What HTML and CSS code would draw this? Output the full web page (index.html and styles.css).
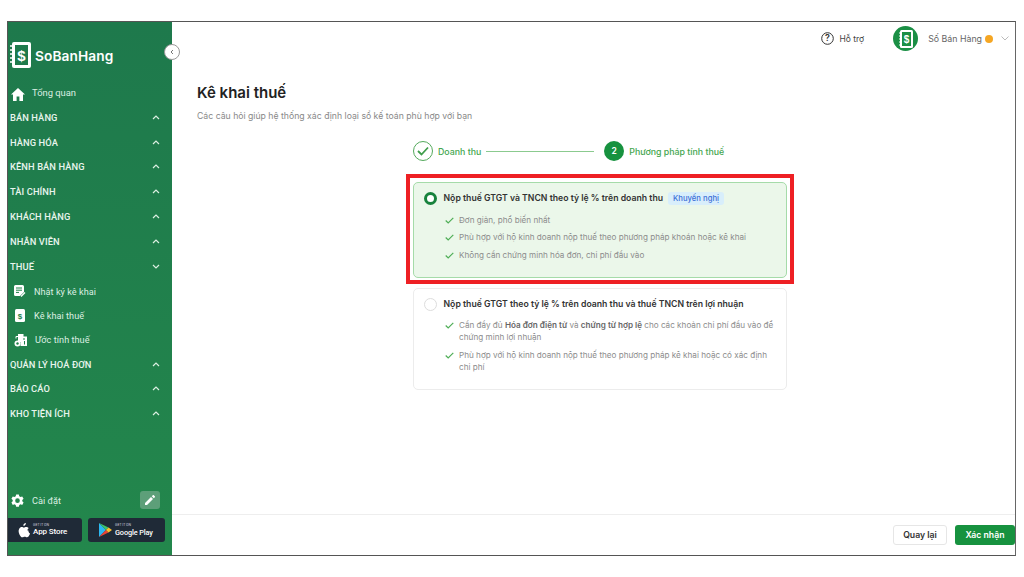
FILE: index.html
```html
<!DOCTYPE html>
<html lang="vi">
<head>
<meta charset="utf-8">
<title>Kê khai thuế</title>
<link rel="stylesheet" href="styles.css">
</head>
<body>
<div class="app">
  <aside class="sidebar">
    <div class="logo">
      <svg class="logo-mark" width="21" height="26" viewBox="0 0 21 26"><rect x="2" y="0" width="19" height="26" rx="2" fill="#fff"/><path d="M0 4h4M0 8h4M0 12h4M0 16h4M0 20h4" stroke="#fff" stroke-width="1.4"/><rect x="5" y="3" width="13" height="20" fill="#1e7a4c"/><text x="11.5" y="19" text-anchor="middle" class="logo-dollar">$</text></svg>
      <span class="logo-text">SoBanHang</span>
    </div>
    <button class="collapse"><svg width="6" height="6" viewBox="0 0 6 6"><path d="M4 1 2 3l2 2" fill="none" stroke="#777" stroke-width="1"/></svg></button>
    <nav class="nav">
      <a class="overview"><svg width="14" height="13" viewBox="0 0 14 13"><path d="M7 0 0 6.5h2V13h3.6V8.6h2.8V13H12V6.5h2z" fill="#fff"/></svg><span>Tổng quan</span></a>
      <a class="group">BÁN HÀNG<svg class="chev" viewBox="0 0 8 5"><path d="M1 4l3-3 3 3"/></svg></a>
      <a class="group">HÀNG HÓA<svg class="chev" viewBox="0 0 8 5"><path d="M1 4l3-3 3 3"/></svg></a>
      <a class="group">KÊNH BÁN HÀNG<svg class="chev" viewBox="0 0 8 5"><path d="M1 4l3-3 3 3"/></svg></a>
      <a class="group">TÀI CHÍNH<svg class="chev" viewBox="0 0 8 5"><path d="M1 4l3-3 3 3"/></svg></a>
      <a class="group">KHÁCH HÀNG<svg class="chev" viewBox="0 0 8 5"><path d="M1 4l3-3 3 3"/></svg></a>
      <a class="group">NHÂN VIÊN<svg class="chev" viewBox="0 0 8 5"><path d="M1 4l3-3 3 3"/></svg></a>
      <a class="group group-open">THUẾ<svg class="chev" viewBox="0 0 8 5"><path d="M1 1l3 3 3-3"/></svg></a>
      <a class="sub"><svg width="12" height="13" viewBox="0 0 12 13"><path d="M0 1.5A1.5 1.5 0 0 1 1.500 0h7A1.500 1.500 0 0 1 10 1.500V7L6 11H1.500A1.500 1.500 0 0 1 0 9.500z" fill="#fff"/><path d="M2 3h6M2 5.200h6M2 7.400h3" stroke="#1f8049" stroke-width="1"/><path d="M7 11.500 11 7.500" stroke="#fff" stroke-width="1.300"/></svg><span>Nhật ký kê khai</span></a>
      <a class="sub"><svg width="12" height="13" viewBox="0 0 12 13"><rect x="1" y="0" width="10" height="13" rx="1.500" fill="#fff"/><text x="6" y="9.500" text-anchor="middle" class="sub-dollar">$</text></svg><span>Kê khai thuế</span></a>
      <a class="sub sub-wide"><svg width="13" height="14" viewBox="0 0 13 14"><path d="M4 1h5.500v2.500H13V13H6.500V9H4z" fill="#fff"/><path d="M9 6h2M10.500 8v3.500" stroke="#1f8049" stroke-width="1"/><path d="M6 3.500H2v2" fill="none" stroke="#fff"/><circle cx="3.500" cy="10.500" r="3" fill="#fff"/><circle cx="3.500" cy="10.500" r="1.200" fill="#1f8049"/></svg><span>Ước tính thuế</span></a>
      <a class="group">QUẢN LÝ HOÁ ĐƠN<svg class="chev" viewBox="0 0 8 5"><path d="M1 4l3-3 3 3"/></svg></a>
      <a class="group">BÁO CÁO<svg class="chev" viewBox="0 0 8 5"><path d="M1 4l3-3 3 3"/></svg></a>
      <a class="group">KHO TIỆN ÍCH<svg class="chev" viewBox="0 0 8 5"><path d="M1 4l3-3 3 3"/></svg></a>
    </nav>
    <div class="settings">
      <svg width="13" height="13" viewBox="0 0 24 24"><path fill="#fff" fill-rule="evenodd" d="M9.500 1h5l.8 3.200 2.300 1.300 3.100-1 2.500 4.300-2.400 2.200v2.600l2.400 2.200-2.500 4.300-3.100-1-2.300 1.300-.8 3.200h-5l-.8-3.200-2.300-1.300-3.100 1L.8 15.800l2.400-2.200V11L.8 8.800l2.500-4.300 3.100 1 2.300-1.300zM12 8a4.300 4.300 0 1 0 0 8.600A4.300 4.300 0 0 0 12 8z"/></svg>
      <span>Cài đặt</span>
      <button class="edit"><svg width="10" height="10" viewBox="0 0 10 10"><path d="M0 10V8l6-6 2 2-6 6zM6.800 1.200 7.800.2a.7.7 0 0 1 1 0l1 1a.7.7 0 0 1 0 1l-1 1z" fill="#fff"/></svg></button>
    </div>
    <div class="stores">
      <a class="store store-apple">
        <svg width="12" height="15" viewBox="0 0 12 15"><path fill="#fff" d="M8.300 0c.1 1.500-1.200 3-2.700 2.900C5.400 1.500 6.900.100 8.300 0zM9.900 7.900c0-1.500 1.200-2.200 1.300-2.300C10.500 4.500 9.300 4.300 8.800 4.300c-1-.1-2 .6-2.600.6-.5 0-1.300-.6-2.200-.6C2.900 4.300 1.900 5 1.300 6-.1 8.300 1 11.700 2.300 13.500c.6.900 1.400 1.900 2.400 1.500.9 0 1.300-.6 2.400-.6s1.400.6 2.400.6 1.600-.9 2.200-1.800c.7-1 1-2 1-2-.1 0-1.800-.8-1.800-3.300z" transform="scale(.95)"/></svg>
        <span class="store-text"><small>GET IT ON</small><b>App Store</b></span>
      </a>
      <a class="store">
        <svg width="13" height="14" viewBox="0 0 13 14"><path d="M0 0v14l7-7z" fill="#2bb8f2"/><path d="M0 0l7 7 2.500-2.500z" fill="#3cc46a"/><path d="M0 14l7-7 2.500 2.500z" fill="#ea4335"/><path d="M9.500 4.500 7 7l2.500 2.500L13 7z" fill="#fbc02d"/></svg>
        <span class="store-text"><small>GET IT ON</small><b class="play">Google Play</b></span>
      </a>
    </div>
  </aside>
  <main class="main">
    <header class="topbar">
      <span class="help"><svg width="13" height="13" viewBox="0 0 13 13"><circle cx="6.500" cy="6.500" r="5.800" fill="none" stroke="#333" stroke-width="1"/><text x="6.500" y="9.300" text-anchor="middle" class="help-q">?</text></svg>Hỗ trợ</span>
      <span class="avatar"><svg width="14" height="18" viewBox="0 0 14 18"><rect x="1" y="0" width="13" height="18" rx="1.500" fill="#fff"/><path d="M0 3h2M0 6h2M0 9h2M0 12h2M0 15h2" stroke="#fff"/><rect x="3" y="2" width="9" height="14" fill="#1b8f45"/><text x="7.500" y="13" text-anchor="middle" class="avatar-dollar">$</text></svg></span>
      <span class="user">Số Bán Hàng</span>
      <span class="dot"></span>
      <svg class="caret" width="8" height="5" viewBox="0 0 8 5"><path d="M.5.500 4 4 7.500.500" fill="none" stroke="#aaa" stroke-width=".8"/></svg>
    </header>
    <section class="content">
      <h1>Kê khai thuế</h1>
      <p class="lead">Các câu hỏi giúp hệ thống xác định loại sổ kế toán phù hợp với bạn</p>
      <div class="steps">
        <span class="step-check"><svg width="12" height="10" viewBox="0 0 12 10"><path d="M1 5l3.500 3.500L11 1.500" fill="none" stroke="#3f9d4b" stroke-width="1.800"/></svg></span>
        <span class="step-label">Doanh thu</span>
        <span class="step-line"></span>
        <span class="step-num">2</span>
        <span class="step-label">Phương pháp tính thuế</span>
      </div>
      <div class="options">
        <article class="option option-on">
          <div class="option-head">
            <span class="radio radio-on"></span>
            <strong>Nộp thuế GTGT và TNCN theo tỷ lệ % trên doanh thu</strong>
            <span class="tag">Khuyến nghị</span>
          </div>
          <ul>
            <li><svg class="tick" viewBox="0 0 9 7"><path d="M.7 3.500 3.200 6 8.300.800"/></svg><span>Đơn giản, phổ biến nhất</span></li>
            <li><svg class="tick" viewBox="0 0 9 7"><path d="M.7 3.500 3.200 6 8.300.800"/></svg><span>Phù hợp với hộ kinh doanh nộp thuế theo phương pháp khoán hoặc kê khai</span></li>
            <li><svg class="tick" viewBox="0 0 9 7"><path d="M.7 3.500 3.200 6 8.300.800"/></svg><span>Không cần chứng minh hóa đơn, chi phí đầu vào</span></li>
          </ul>
        </article>
        <article class="option">
          <div class="option-head">
            <span class="radio"></span>
            <strong>Nộp thuế GTGT theo tỷ lệ % trên doanh thu và thuế TNCN trên lợi nhuận</strong>
          </div>
          <ul>
            <li><svg class="tick" viewBox="0 0 9 7"><path d="M.7 3.500 3.200 6 8.300.800"/></svg><span>Cần đầy đủ <b>Hóa đơn điện tử</b> và <b>chứng từ hợp lệ</b> cho các khoản chi phí đầu vào để chứng minh lợi nhuận</span></li>
            <li><svg class="tick" viewBox="0 0 9 7"><path d="M.7 3.500 3.200 6 8.300.800"/></svg><span>Phù hợp với hộ kinh doanh nộp thuế theo phương pháp kê khai hoặc có xác định chi&nbsp;phí</span></li>
          </ul>
        </article>
      </div>
    </section>
    <footer class="footer">
      <button class="btn">Quay lại</button>
      <button class="btn btn-primary">Xác nhận</button>
    </footer>
  </main>
</div>
</body>
</html>
```
FILE: styles.css
```css
* { box-sizing: border-box; }
html, body { margin: 0; height: 100%; background: #fff; }
body { padding: 21px 8px 21px 7px; font-family: Inter, "Noto Sans", sans-serif; color: #333; overflow: hidden; }
button { font-family: inherit; cursor: pointer; }
svg { display: block; flex: none; }

.app { display: flex; height: 535px; border: 1px solid #555; border-right-color: #666; background: #fff; }

.sidebar { position: relative; width: 164px; flex: none; display: flex; flex-direction: column; background: linear-gradient(180deg, #1e794c 0%, #23874c 100%); color: #fff; font-family: Roboto, Inter, sans-serif; }
.logo { display: flex; align-items: center; gap: 4px; padding: 6px 0 0 2px; height: 59px; }
.logo-dollar { font: 700 15px "Liberation Sans", sans-serif; fill: #fff; }
.logo-text { font: 600 13.700px Inter, sans-serif; letter-spacing: .1px; position: relative; top: 1px; }
.collapse { position: absolute; top: 22px; right: -8px; width: 16px; height: 16px; padding: 0; border: 1px solid #999; border-radius: 50%; background: #fff; display: flex; align-items: center; justify-content: center; }

.nav { display: flex; flex-direction: column; }
.overview { display: flex; align-items: center; height: 24px; padding-left: 3px; font-size: 9.400px; color: #dcefe2; }
.overview svg { margin-right: 7px; position: relative; top: 1px; }
.overview span { position: relative; top: -1px; }
.group { display: flex; align-items: center; justify-content: space-between; height: 24.800px; padding: 0 12px 0 2px; font-size: 9.300px; font-weight: 500; color: #e8f5ec; letter-spacing: .1px; }
.group-open { margin-bottom: 1.200px; }
.chev { width: 8px; height: 5px; fill: none; stroke: #dcefe2; stroke-width: 1.200; }
.sub { display: flex; align-items: center; height: 24px; padding-left: 6px; font-size: 9.100px; color: #dcefe2; }
.sub span { margin-left: 8px; letter-spacing: .05px; }
.sub-wide span { margin-left: 8px; }
.sub-dollar { font: 700 8px "Liberation Sans", sans-serif; fill: #1f8049; }

.settings { margin-top: auto; display: flex; align-items: center; padding: 0 12px 0 3px; height: 20px; font-size: 9.200px; color: #dcefe2; }
.settings span { margin-left: 8px; }
.edit { margin-left: auto; width: 20px; height: 18px; padding: 0; border: 0; border-radius: 3px; background: #5d9f79; display: flex; align-items: center; justify-content: center; }
.stores { display: flex; gap: 6px; padding: 8px 7px 0 0; margin-bottom: 13px; }
.store { flex: 1; height: 24px; border-radius: 3px; background: #1f2a37; display: flex; align-items: center; gap: 3px; padding-left: 10px; }
.store-apple { flex: 0 0 74px; border-radius: 0 3px 3px 0; }
.store:last-child { padding-left: 11px; }
.store-text { display: flex; flex-direction: column; line-height: 1; color: #fff; }
.store-text small { font-size: 3.500px; margin-bottom: 1px; color: #ccd; }
.store-text b { font-size: 8px; font-weight: 500; letter-spacing: -.1px; }
.store-text .play { font-size: 7.300px; }

.main { flex: 1; min-width: 0; display: flex; flex-direction: column; }
.topbar { display: flex; align-items: center; height: 33px; flex: none; padding: 0 6px 0 0; justify-content: flex-end; font-size: 8.500px; color: #555; }
.help { display: flex; align-items: center; gap: 5px; color: #444; margin-right: 29px; }
.help-q { font: 600 9px Inter, sans-serif; fill: #333; }
.avatar { width: 25px; height: 25px; border-radius: 50%; background: #1b8f45; display: flex; align-items: center; justify-content: center; margin: 0 10px 0 0; }
.avatar-dollar { font: 700 10px "Liberation Sans", sans-serif; fill: #fff; }
.user { color: #666; font-size: 8.800px; }
.dot { width: 8px; height: 8px; border-radius: 50%; background: #f5a623; margin: 0 8px 0 3px; }

.content { flex: 1; min-height: 0; padding: 28px 0 0 25px; }
h1 { margin: 0; font-size: 15px; line-height: 20px; font-weight: 600; color: #222; }
.lead { margin: 7px 0 0; font-size: 8.700px; line-height: 12px; color: #888; }
.steps { display: flex; align-items: center; width: 374px; margin: 19px 0 0 216px; height: 20px; font-size: 8.800px; font-weight: 500; color: #44a64f; }
.step-check { width: 20px; height: 20px; border-radius: 50%; border: 1.500px solid #54a95c; display: flex; align-items: center; justify-content: center; margin-right: 5px; }
.step-line { width: 108px; height: 1px; background: #8bca8f; margin: 0 10px 0 5px; }
.step-num { width: 20px; height: 20px; border-radius: 50%; background: #17923f; color: #fff; font-size: 8.500px; font-weight: 600; display: flex; align-items: center; justify-content: center; margin-right: 5px; }
.options { display: flex; flex-direction: column; gap: 10px; width: 374px; margin: 21px 0 0 216px; }
.option { border: 1px solid #ececec; border-radius: 5px; padding: 8px 10px 0 10px; background: #fff; height: 102px; }
.option-on { position: relative; border-color: #a5dba9; background: #ebf7ea; height: 96px; }
.option-on::after { content: ""; position: absolute; top: -9px; right: -8px; bottom: -7px; left: -8px; border: 4px solid #ee2024; pointer-events: none; }
.option-head { display: flex; align-items: center; height: 14px; }
.option-head strong { font-size: 8.700px; font-weight: 600; color: #333; margin-left: 6.500px; white-space: nowrap; }
.radio { width: 13px; height: 13px; border-radius: 50%; border: 1px solid #ddd; background: #fff; flex: none; }
.radio-on { border: 3.500px solid #17823c; }
.tag { margin-left: 5px; height: 13px; padding: 0 5px; border-radius: 3px; background: #d8eefb; color: #3b6fd8; font-size: 7.700px; font-weight: 500; line-height: 13px; }
ul { list-style: none; margin: 5px 0 0; padding: 0 0 0 21px; }
li { display: flex; font-size: 8.130px; line-height: 12px; color: #8c8c8c; padding: 3px 0; }
.option-on ul { margin-top: 5.500px; }
.option-on li { padding: 3px 0 2.500px; }
li b { font-weight: 600; color: #666; }
.tick { width: 9px; height: 7px; fill: none; stroke: #4fae57; stroke-width: 1.200; margin: 3px 5px 0 0; }

.footer { display: flex; justify-content: flex-end; align-items: center; gap: 8px; height: 41px; flex: none; border-top: 1px solid #eee; padding: 0; }
.btn { height: 20px; padding: 0; width: 54px; border: 1px solid #e6e6e6; border-radius: 3px; background: #fff; color: #333; font-size: 8.700px; font-weight: 600; }
.btn-primary { width: 60px; border: 0; background: #17923f; color: #fff; }
```
